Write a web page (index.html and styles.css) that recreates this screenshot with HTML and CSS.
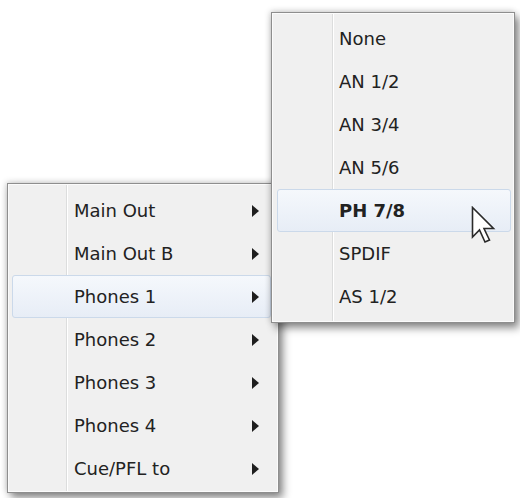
FILE: index.html
```html
<!DOCTYPE html>
<html>
<head>
<meta charset="utf-8">
<link rel="stylesheet" href="styles.css">
</head>
<body>
<div class="stage">
  <div class="menu menu-main">
    <div class="item">Main Out<span class="arrow"></span></div>
    <div class="item">Main Out B<span class="arrow"></span></div>
    <div class="item hot">Phones 1<span class="arrow"></span></div>
    <div class="item">Phones 2<span class="arrow"></span></div>
    <div class="item">Phones 3<span class="arrow"></span></div>
    <div class="item">Phones 4<span class="arrow"></span></div>
    <div class="item">Cue/PFL to<span class="arrow"></span></div>
  </div>
  <div class="menu menu-sub">
    <div class="item">None</div>
    <div class="item">AN 1/2</div>
    <div class="item">AN 3/4</div>
    <div class="item">AN 5/6</div>
    <div class="item hot bold">PH 7/8</div>
    <div class="item">SPDIF</div>
    <div class="item">AS 1/2</div>
  </div>
  <svg class="cursor" width="26" height="40" viewBox="0 0 26 40">
    <path d="M1.5 1.5 L1.5 31 L8.5 24 L14 36 L18.5 34 L13 22.5 L22.5 22.5 Z" fill="#fff" stroke="#2a2a2a" stroke-width="1.6" stroke-linejoin="miter"/>
  </svg>
</div>
</body>
</html>
```
FILE: styles.css
```css
html, body {
  margin: 0;
  padding: 0;
  background: #ffffff;
}
.stage {
  position: relative;
  width: 520px;
  height: 498px;
  overflow: hidden;
  font-family: "DejaVu Sans", sans-serif;
  font-size: 18px;
  color: #222222;
}
.menu {
  position: absolute;
  box-sizing: border-box;
  display: flex;
  flex-direction: column;
  background-color: #f0f0f0;
  border: 1px solid #8e8e8e;
  box-shadow: inset 0 0 0 1px #fbfbfb, 4px 5px 8px rgba(0,0,0,0.45), -1px -1px 6px rgba(0,0,0,0.18);
}
.menu-main {
  left: 7px;
  top: 183px;
  width: 272px;
  height: 310px;
  padding: 5px 7px 2px 4px;
  background-image: linear-gradient(to right, transparent 58px, #dcdddd 58px, #dcdddd 59px, #ffffff 59px, #ffffff 60px, transparent 60px);
}
.menu-sub {
  left: 271px;
  top: 12px;
  width: 244px;
  height: 311px;
  padding: 4px 3px 3px 5px;
  z-index: 2;
  background-image: linear-gradient(to right, transparent 60px, #dcdddd 60px, #dcdddd 61px, #ffffff 61px, #ffffff 62px, transparent 62px);
}
.item {
  box-sizing: border-box;
  height: 43px;
  display: flex;
  align-items: center;
  padding-left: 61px;
  padding-right: 11px;
  border: 1px solid transparent;
  border-radius: 3px;
  white-space: nowrap;
}
.item.hot {
  border-color: #cbd9ea;
  background: linear-gradient(#f5f8fc, #e7edf6);
}
.item.bold {
  font-weight: bold;
}
.arrow {
  margin-left: auto;
  width: 0;
  height: 0;
  border-top: 6px solid transparent;
  border-bottom: 6px solid transparent;
  border-left: 7px solid #1e1e1e;
}
.cursor {
  position: absolute;
  left: 471px;
  top: 206px;
  z-index: 5;
}
```
